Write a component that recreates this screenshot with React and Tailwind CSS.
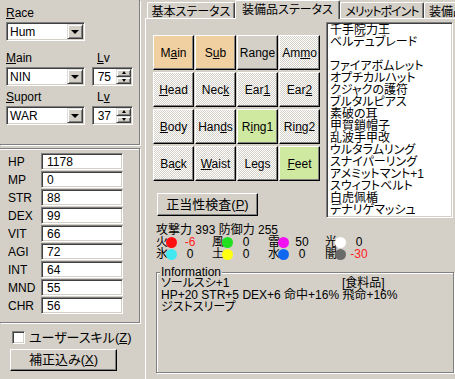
import React from "react";

const sunken =
  "border border-t-[#808080] border-l-[#808080] border-r-white border-b-white shadow-[inset_1px_1px_0_#404040,inset_-1px_-1px_0_#d4d0c8]";
const raised =
  "border border-t-[#dfdfdf] border-l-[#dfdfdf] border-r-[#404040] border-b-[#404040] shadow-[inset_1px_1px_0_#ffffff,inset_-1px_-1px_0_#808080]";

const Ul = ({ text, i }) => (
  <span>
    {text.slice(0, i)}
    <span className="underline underline-offset-[1px]">{text[i]}</span>
    {text.slice(i + 1)}
  </span>
);

function Select({ value, width }) {
  return (
    <div className={`${sunken} ${width} flex h-[19px] items-center bg-white pr-[1px]`}>
      <span className="flex-1 pl-[3px] leading-[12px]">{value}</span>
      <div className={`${raised} flex h-[15px] w-[16px] items-center justify-center bg-[#d4d0c8]`}>
        <div className="h-0 w-0 border-x-[4px] border-t-[4px] border-x-transparent border-t-black" />
      </div>
    </div>
  );
}

function Spin({ value }) {
  return (
    <div className={`${sunken} flex h-[19px] w-[41px] items-center bg-white pr-[1px]`}>
      <span className="flex-1 pr-[5px] text-right leading-[12px]">{value}</span>
      <div className="flex h-[15px] w-[15px] flex-col">
        <div className={`${raised} flex flex-1 items-center justify-center bg-[#d4d0c8]`}>
          <div className="h-0 w-0 border-x-[2.5px] border-b-[3px] border-x-transparent border-b-black" />
        </div>
        <div className={`${raised} flex flex-1 items-center justify-center bg-[#d4d0c8]`}>
          <div className="h-0 w-0 border-x-[2.5px] border-t-[3px] border-x-transparent border-t-black" />
        </div>
      </div>
    </div>
  );
}

const stats = [
  ["HP", "1178"],
  ["MP", "0"],
  ["STR", "88"],
  ["DEX", "99"],
  ["VIT", "66"],
  ["AGI", "72"],
  ["INT", "64"],
  ["MND", "55"],
  ["CHR", "56"],
];

const hatch =
  "bg-[#e6e4e0] bg-[image:repeating-conic-gradient(#ffffff_0_25%,#d4d0c8_0_50%)] bg-[length:2px_2px]";

const equip = [
  ["Main", 1, "bg-[#f0cfa0]"],
  ["Sub", 1, "bg-[#f0cfa0]"],
  ["Range", 3, "bg-[#d4d0c8]"],
  ["Ammo", 2, hatch],
  ["Head", 0, hatch],
  ["Neck", 3, hatch],
  ["Ear1", 3, hatch],
  ["Ear2", 3, hatch],
  ["Body", 0, hatch],
  ["Hands", 3, hatch],
  ["Ring1", 1, "bg-[#cfe9a1]"],
  ["Ring2", 2, hatch],
  ["Back", 2, hatch],
  ["Waist", 0, hatch],
  ["Legs", 2, hatch],
  ["Feet", 0, "bg-[#cfe9a1]"],
];

const items = [
  "千手院力王",
  "ベルデュブレード",
  "",
  "ファイアボムレット",
  "オプチカルハット",
  "クジャクの護符",
  "ブルタルピアス",
  "素破の耳",
  "甲賀鎖帽子",
  "乱波手甲改",
  "ウルタラムリング",
  "スナイパーリング",
  "アメミットマント+1",
  "スウィフトベルト",
  "白虎佩楯",
  "デナリゲマッシュ",
];

const elems = [
  ["火", "bg-[#ff1010]", "-6", true],
  ["風", "bg-[#20e020]", "0"],
  ["雷", "bg-[#f010f0]", "50"],
  ["光", "bg-white", "0"],
  ["氷", "bg-[#40e8f0]", "0"],
  ["土", "bg-[#ffff10]", "0"],
  ["水", "bg-[#1068f0]", "0"],
  ["闇", "bg-[#6a6a6a]", "-30", true],
];

export default function App() {
  return (
    <div className="flex h-[379px] w-[455px] overflow-hidden bg-[#d4d0c8] text-[12px] leading-[12px] text-black [font-family:'Liberation_Sans','Noto_Sans_CJK_JP',sans-serif] [font-feature-settings:'palt']">
      {/* left side */}
      <div className="flex w-[145px] shrink-0 flex-col">
        <div className="h-[145px] w-[140px] border-r border-b border-[#808080] pl-[6px] pt-[7px] shadow-[1px_1px_0_#ffffff]">
          <div className="h-[12px]">
            <Ul text="Race" i={0} />
          </div>
          <div className="mt-[3px]">
            <Select value="Hum" width="w-[79px]" />
          </div>
          <div className="mt-[11px] flex h-[12px]">
            <span className="w-[91px]">
              <Ul text="Main" i={0} />
            </span>
            <Ul text="Lv" i={0} />
          </div>
          <div className="mt-[3px] flex gap-[7px]">
            <Select value="NIN" width="w-[79px]" />
            <Spin value="75" />
          </div>
          <div className="mt-[5px] flex h-[12px]">
            <span className="w-[91px]">
              <Ul text="Suport" i={0} />
            </span>
            <Ul text="Lv" i={1} />
          </div>
          <div className="mt-[3px] flex gap-[7px]">
            <Select value="WAR" width="w-[79px]" />
            <Spin value="37" />
          </div>
        </div>

        <div className="mt-[3px] h-[175px] w-[140px] border-t border-r border-b border-[#808080] pt-[4px] shadow-[1px_1px_0_#ffffff,inset_0_1px_0_#ffffff]">
          {stats.map(([k, v]) => (
            <div key={k} className="flex h-[18px] items-start pl-[8px]">
              <span className="flex h-[17px] w-[33px] items-center">{k}</span>
              <div className={`${sunken} flex h-[17px] w-[82px] items-center bg-white pl-[5px]`}>{v}</div>
            </div>
          ))}
        </div>

        <div className="mt-[8px] flex h-[13px] items-center pl-[12px]">
          <div className={`${sunken} h-[13px] w-[13px] bg-white`} />
          <span className="ml-[4px] text-[13px]">
            ユーザースキル(<span className="underline">Z</span>)
          </span>
        </div>
        <button className="mt-[5px] ml-[10px] flex h-[22px] w-[107px] items-center justify-center border border-t-white border-l-white border-r-black border-b-black bg-[#d4d0c8] shadow-[inset_-1px_-1px_0_#808080]">
          <span className="text-[13px]">
            補正込み(<span className="underline">X</span>)
          </span>
        </button>
      </div>

      {/* right side: tabs */}
      <div className="flex min-w-0 flex-1 flex-col">
        <div className="flex h-[18px] items-end pl-[2px]">
          <div className="flex h-[16px] w-[88px] shrink-0 items-center justify-center rounded-t-[2px] border-t border-l border-r border-t-white border-l-white border-r-[#404040] pt-[2px] shadow-[inset_-1px_0_0_#808080]">
            基本ステータス
          </div>
          <div className="relative z-10 -mb-[1px] flex h-[19px] w-[105px] shrink-0 items-start justify-center rounded-t-[2px] border-t border-l border-r border-t-white border-l-white border-r-[#404040] bg-[#d4d0c8] pt-[3px] shadow-[inset_-1px_0_0_#808080]">
            装備品ステータス
          </div>
          <div className="flex h-[16px] w-[84px] shrink-0 items-center justify-center overflow-hidden whitespace-nowrap rounded-t-[2px] border-t border-l border-r border-t-white border-l-white border-r-[#404040] pt-[2px] tracking-[-1px] shadow-[inset_-1px_0_0_#808080]">
            メリットポイント
          </div>
          <div className="flex h-[16px] w-[60px] shrink-0 items-center overflow-hidden whitespace-nowrap rounded-t-[2px] border-t border-l border-t-white border-l-white pl-[4px] pt-[2px]">
            装備品
          </div>
        </div>

        <div className="flex-1 border-t border-l border-white">
          <div className="flex pl-[7px] pt-[3px]">
            <div className="flex flex-col">
              <div className="mt-[13px] grid grid-cols-[repeat(4,41px)] grid-rows-[repeat(4,35px)] gap-x-[1px] gap-y-[2px]">
                {equip.map(([label, u, bg]) => (
                  <button
                    key={label}
                    className={`${bg} flex items-center justify-center border border-t-white border-l-white border-r-black border-b-black shadow-[inset_-1px_-1px_0_#808080]`}
                  >
                    <Ul text={label} i={u} />
                  </button>
                ))}
              </div>
              <button className="mt-[12px] ml-[4px] flex h-[23px] w-[101px] items-center justify-center border border-t-white border-l-white border-r-black border-b-black bg-[#d4d0c8] shadow-[inset_-1px_-1px_0_#808080]">
                <span className="text-[13px]">
                  正当性検査(<span className="underline">P</span>)
                </span>
              </button>
            </div>
            <div className={`${sunken} ml-[6px] h-[196px] w-[127px] shrink-0 overflow-hidden bg-white pl-[3px] pt-[1px]`}>
              {items.map((it, n) => (
                <div key={n} className="h-[12px] whitespace-nowrap leading-[12px]">
                  {it}
                </div>
              ))}
            </div>
          </div>

          <div className="mt-[6px] pl-[10px]">
            <div className="h-[12px]">攻撃力 393 防御力 255</div>
            <div className="grid grid-cols-[56px_56px_57px_56px] grid-rows-[12px_12px]">
              {elems.map(([k, c, v, red]) => (
                <div key={k} className="flex h-[12px] items-center">
                  <span className="w-[10px] whitespace-nowrap">{k}</span>
                  <span className={`${c} h-[11px] w-[11px] rounded-full`} />
                  <span className={`w-[26px] text-center ${red ? "text-[#ff2020]" : ""}`}>{v}</span>
                </div>
              ))}
            </div>
          </div>

          <div className="relative mt-[12px] ml-[10px] h-[101px] w-[298px] border border-[#808080] pl-[4px] pt-[4px] shadow-[1px_1px_0_#ffffff,inset_1px_1px_0_#ffffff]">
            <span className="absolute -top-[7px] left-[3px] bg-[#d4d0c8] px-[1px] leading-[12px]">Information</span>
            <div className="flex h-[12px]">
              <span className="w-[181px]">ソールスシ+1</span>
              <span>[食料品]</span>
            </div>
            <div className="h-[12px] whitespace-nowrap">HP+20 STR+5 DEX+6 命中+16% 飛命+16%</div>
            <div className="h-[12px]">ジストスリープ</div>
          </div>
        </div>
      </div>
    </div>
  );
}
